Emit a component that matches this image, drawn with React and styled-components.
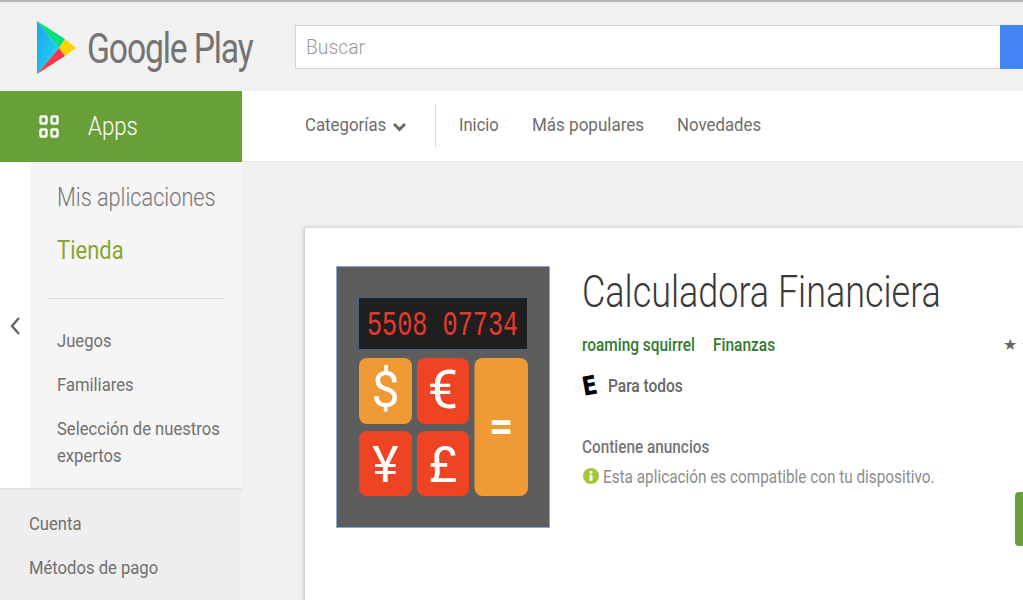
import React from 'react';
import styled, { createGlobalStyle } from 'styled-components';

const Global = createGlobalStyle`
  html, body { margin: 0; padding: 0; background: #fff; }
  body { font-family: Roboto, "Liberation Sans", sans-serif; }
  * { box-sizing: border-box; }
`;

/* The reference is a horizontally squeezed capture, so text is condensed with scaleX. */
const Squeezed = styled.span`
  display: inline-block; flex: none; white-space: nowrap;
  width: ${p => p.$w}px;
  transform: scaleX(${p => p.$x});
  transform-origin: left center;
`;

const Page = styled.div`
  width: 1023px; height: 600px; overflow: hidden;
  display: flex; flex-direction: column;
  background: #f0f0f0; color: #6f6f6f;
`;
const Header = styled.header`
  height: 91px; flex: none; display: flex; align-items: flex-start;
  background: #f1f1f1; border-top: 2px solid #b4b4b4;
  padding: 18px 0 0 37px;
`;
const Logo = styled.div`
  width: 258px; flex: none; display: flex; align-items: center; gap: 10px; height: 56px;
`;
const LogoText = styled.span`
  display: inline-block; width: 165px; white-space: nowrap;
  font-size: 38px; color: #747474; letter-spacing: -1.3px;
  transform: scale(.887, 1.12); transform-origin: left center;
`;
const Search = styled.div`
  flex: 1; display: flex; height: 44px; margin-top: 5px;
`;
const SearchInput = styled.div`
  flex: 1; background: #fff; border: 1px solid #d6d6d6; border-right: 0;
  padding-left: 10px; font-size: 21px; font-weight: 300; line-height: 43px; color: #9a9a9a;
`;
const SearchButton = styled.div`width: 23px; background: #4285f4;`;

const NavRow = styled.div`height: 71px; flex: none; display: flex;`;
const AppsTab = styled.div`
  width: 242px; flex: none; background: #689f38; color: #fff;
  display: flex; align-items: center; padding-left: 39px; gap: 29px;
  font-size: 25px; font-weight: 300;
`;
const Nav = styled.nav`
  flex: 1; background: #fff; display: flex; align-items: center; padding-left: 63px;
  font-size: 19px; color: #6d6d6d; border-bottom: 1px solid #e8e8e8;
`;
const NavItem = styled(Squeezed)`margin: 0 34px 3px 0;`;
const CategoryLabel = styled(Squeezed)`margin-bottom: 3px;`;
const Categories = styled.span`
  display: flex; align-items: center; gap: 7px; padding-right: 29px; margin-right: 23px;
  height: 44px; border-right: 1px solid #d8d8d8;
`;

const Body = styled.div`flex: 1; min-height: 0; display: flex;`;
const Side = styled.aside`
  width: 242px; flex: none; display: flex; flex-direction: column; background: #fff;
`;
const SideTop = styled.div`display: flex; height: 326px; flex: none;`;
const Rail = styled.div`
  width: 30px; flex: none; display: flex; justify-content: center; padding-top: 154px;
  background: #fff;
`;
const SideMenu = styled.div`
  flex: 1; background: #f5f5f5; padding: 19px 16px 0 27px;
`;
const BigLink = styled.div`
  font-size: 25px; line-height: 34px; white-space: nowrap;
  color: ${p => p.$active ? '#8aa62f' : '#757575'};
  font-weight: ${p => p.$active ? 400 : 300};
  margin-bottom: ${p => p.$mb || 0}px;
  transform: scaleX(${p => p.$active ? .88 : .868}); transform-origin: left center;
`;
const Divider = styled.hr`
  border: 0; height: 1px; background: #dedede; margin: 30px 0 28px -10px; width: 178px;
`;
const SmallLink = styled.div`
  width: 190px; font-size: 19px; line-height: 27px; color: #707070; margin-bottom: 17px;
  transform: scaleX(.875); transform-origin: left center;
`;
const SideBottom = styled.div`
  flex: 1; background: #eeeeee; padding: 20px 0 0 29px; border-top: 2px solid #e2e2e2;
`;
const Shade = styled.div`
  flex: 1; min-width: 0; padding: 66px 0 0 63px; background: #f0f0f0;
`;
const Card = styled.section`
  height: 400px; background: #fff; box-shadow: -1px 0 4px rgba(0,0,0,.22);
  display: flex; padding: 38px 0 0 31px; overflow: hidden; gap: 32px;
`;
const Info = styled.div`flex: 1; min-width: 0; display: flex; flex-direction: column;`;
const Title = styled.h1`
  margin: 1px 0 0; font-size: 44px; font-weight: 300; line-height: 50px; color: #3a3a3a; white-space: nowrap;
  transform: scaleX(.817); transform-origin: left center;
`;
const Meta = styled.div`
  display: flex; justify-content: space-between; margin-top: 15px; height: 24px; align-items: center;
`;
const Links = styled.div`display: flex; gap: 18px;`;
const GreenLink = styled(Squeezed)`font-size: 18px; font-weight: 500; color: #33792f;`;
const Stars = styled.span`
  width: 20px; flex: none; font-size: 16px; color: #666; letter-spacing: 4px; white-space: nowrap;
`;
const Rating = styled.div`display: flex; align-items: center; gap: 10px; margin-top: 18px; height: 24px;`;
const EBadge = styled.span`
  display: block; width: 16px; flex: none; padding-top: 2px;
  font-family: "DejaVu Sans", sans-serif; font-weight: 700; font-size: 26px; line-height: 24px; color: #000;
  transform: rotate(-10deg) scaleX(.85); transform-origin: left center;
`;
const Strong = styled(Squeezed)`font-size: 17.5px; font-weight: 500; color: #666;`;
const Ads = styled.div`
  font-size: 17.5px; font-weight: 500; white-space: nowrap; margin-top: 37px; line-height: 24px; color: #757575;
  transform: scaleX(.876); transform-origin: left center;
`;
const Compat = styled.div`
  display: flex; align-items: center; gap: 4px; margin: 5px 0 0 1px;
  font-size: 18px; color: #8c8c8c; height: 24px;
`;
const BuyRow = styled.div`display: flex; justify-content: flex-end; margin-top: 4px;`;
const Buy = styled.div`width: 100px; height: 54px; margin-right: -92px; background: #689f38; border-radius: 4px;`;

const GridIcon = () => (
  <svg width="20" height="23" viewBox="0 0 20 23" fill="none" stroke="#fff" strokeWidth="2.4">
    <rect x="1.5" y="1.5" width="6" height="7" rx="1" /><rect x="12.5" y="1.5" width="6" height="7" rx="1" />
    <rect x="1.5" y="14.5" width="6" height="7" rx="1" /><rect x="12.5" y="14.5" width="6" height="7" rx="1" />
  </svg>
);

const PlayLogo = () => (
  <svg width="40" height="56" viewBox="37 20 40 56" style={{ flex: 'none' }}>
    <defs>
      <linearGradient id="blue" x1="0" y1="0" x2="1" y2="0.6">
        <stop offset="0" stopColor="#19a5f0" /><stop offset="1" stopColor="#22d3f4" />
      </linearGradient>
    </defs>
    <polygon points="37,21 37,74 59,48" fill="url(#blue)" />
    <polygon points="37,21 65,39 59,48" fill="#00e07a" />
    <polygon points="65,39 76,48 65,56 59,48" fill="#ffd400" />
    <polygon points="37,74 59,48 65,56" fill="#f0394a" />
  </svg>
);

const Chevron = () => (
  <svg width="13" height="10" viewBox="0 0 13 10" fill="none" stroke="#666" strokeWidth="2.8" style={{ flex: 'none', marginTop: 2 }}><path d="M1 2 L6.5 7.5 L12 2" /></svg>
);
const Back = () => (
  <svg width="12" height="20" viewBox="0 0 12 20" fill="none" stroke="#666" strokeWidth="2.4"><path d="M10 2 L3 10 L10 18" /></svg>
);
const InfoDot = () => (
  <svg width="16" height="16" viewBox="0 0 16 16" style={{ flex: 'none' }}><circle cx="8" cy="8" r="8" fill="#a4c639" />
    <rect x="6.5" y="3" width="3" height="2.8" rx="1" fill="#fff" /><rect x="6.5" y="6.8" width="3" height="6" rx="1" fill="#fff" /></svg>
);

const keys = [
  { x: 23, y: 92, w: 53, h: 66, f: '#f09a35', t: '$', s: 50, dy: 16 },
  { x: 81, y: 92, w: 52, h: 66, f: '#ee4423', t: '€', s: 54, dy: 17 },
  { x: 23, y: 165, w: 53, h: 65, f: '#ee4423', t: '¥', s: 50, dy: 18 },
  { x: 81, y: 165, w: 52, h: 65, f: '#ee4423', t: '£', s: 50, dy: 18 },
  { x: 138.5, y: 92, w: 53.5, h: 138, f: '#f09a35', t: '=', s: 42, w8: 700, dy: 14 },
];

const AppIcon = () => (
  <svg width="214" height="262" viewBox="0 0 214 262" style={{ flex: 'none' }}>
    <rect x=".5" y=".5" width="213" height="261" fill="#5d5d5d" stroke="#8aa8d0" />
    <rect x="22.5" y="31.5" width="169" height="52" fill="#1f1f1f" stroke="#46618a" />
    <text transform="translate(31 69) scale(.7 1)" fontFamily="'Liberation Mono', monospace" fontSize="36" fill="#e8392b">5508 07734</text>
    {keys.map(k => (
      <g key={k.t}>
        <rect x={k.x} y={k.y} width={k.w} height={k.h} rx="8" fill={k.f} />
        <text x={k.x + k.w / 2} y={k.y + k.h / 2 + k.dy} textAnchor="middle" fontFamily="Roboto, sans-serif" fontWeight={k.w8 || 400} fontSize={k.s} fill="#fff">{k.t}</text>
      </g>
    ))}
  </svg>
);

export default function App() {
  return (
    <Page>
      <Global />
      <Header>
        <Logo><PlayLogo /><LogoText>Google Play</LogoText></Logo>
        <Search><SearchInput><Squeezed $w={60} $x={.92}>Buscar</Squeezed></SearchInput><SearchButton /></Search>
      </Header>
      <NavRow>
        <AppsTab><GridIcon /><Squeezed $w={49} $x={.89}>Apps</Squeezed></AppsTab>
        <Nav>
          <Categories><CategoryLabel $w={81} $x={.885}>Categorías</CategoryLabel><Chevron /></Categories>
          <NavItem $w={39} $x={.87}>Inicio</NavItem>
          <NavItem $w={111} $x={.895}>Más populares</NavItem>
          <NavItem $w={84} $x={.885}>Novedades</NavItem>
        </Nav>
      </NavRow>
      <Body>
        <Side>
          <SideTop>
            <Rail><Back /></Rail>
            <SideMenu>
              <BigLink $mb={19}>Mis aplicaciones</BigLink>
              <BigLink $active>Tienda</BigLink>
              <Divider />
              <SmallLink>Juegos</SmallLink>
              <SmallLink>Familiares</SmallLink>
              <SmallLink>Selección de nuestros expertos</SmallLink>
            </SideMenu>
          </SideTop>
          <SideBottom>
            <SmallLink>Cuenta</SmallLink>
            <SmallLink>Métodos de pago</SmallLink>
          </SideBottom>
        </Side>
        <Shade>
          <Card>
            <AppIcon />
            <Info>
              <Title>Calculadora Financiera</Title>
              <Meta>
                <Links>
                  <GreenLink $w={113} $x={.856}>roaming squirrel</GreenLink>
                  <GreenLink $w={62} $x={.86}>Finanzas</GreenLink>
                </Links>
                <Stars>★★</Stars>
              </Meta>
              <Rating><EBadge>E</EBadge><Strong $w={75} $x={.885}>Para todos</Strong></Rating>
              <Ads>Contiene anuncios</Ads>
              <Compat><InfoDot /><Squeezed $w={331} $x={.851}>Esta aplicación es compatible con tu dispositivo.</Squeezed></Compat>
              <BuyRow><Buy /></BuyRow>
            </Info>
          </Card>
        </Shade>
      </Body>
    </Page>
  );
}
